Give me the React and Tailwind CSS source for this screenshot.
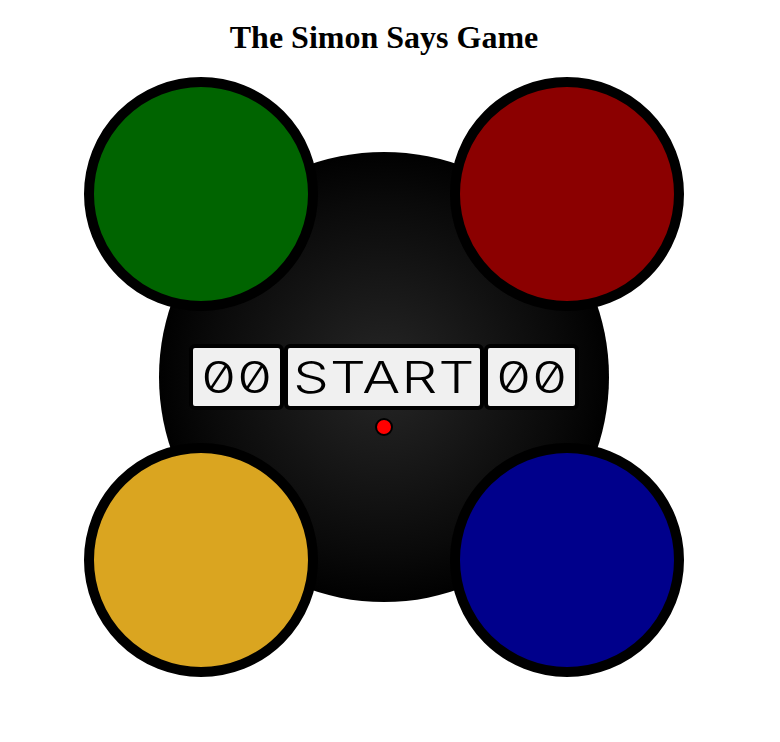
import React from 'react';

const Pad = ({ color }) => (
    <div className={`relative w-[234px] h-[234px] rounded-full border-[10px] border-black ${color}`}></div>
);

const Display = ({ children, width }) => (
    <div className={`${width} h-[66px] border-4 border-black rounded-md bg-[#f0f0f0] flex items-center justify-center`}>
        <span className="inline-block font-['Inter',sans-serif] font-light text-[44px] leading-none tracking-[1px] pl-[1px] slashed-zero text-black scale-x-[1.28]">
            {children}
        </span>
    </div>
);

const App = () => {
    return (
        <div className="w-[768px] min-h-[742px] bg-white flex flex-col items-center">
            <h1 className="mt-[19px] font-['Liberation_Serif',serif] font-bold text-[32px] leading-[37px] text-black">
                The Simon Says Game
            </h1>

            {/* Board */}
            <div className="relative mt-[21px] w-[600px] h-[600px] grid grid-cols-[234px_234px] grid-rows-[234px_234px] justify-between content-between">
                <div className="absolute left-[75px] top-[75px] w-[450px] h-[450px] rounded-full bg-[radial-gradient(circle,#262626_0%,#0a0a0a_55%,#000_72%)] flex items-center justify-center">
                    <div className="relative flex">
                        <Display width="w-[95px]">00</Display>
                        <Display width="w-[200px]">START</Display>
                        <Display width="w-[95px]">00</Display>
                        <div className="absolute top-full left-1/2 -translate-x-1/2 mt-2 w-[18px] h-[18px] rounded-full bg-[#ff0000] border-2 border-black"></div>
                    </div>
                </div>
                <Pad color="bg-[#006400]" />
                <Pad color="bg-[#8b0000]" />
                <Pad color="bg-[#daa520]" />
                <Pad color="bg-[#00008b]" />
            </div>
        </div>
    );
};

export default App;
